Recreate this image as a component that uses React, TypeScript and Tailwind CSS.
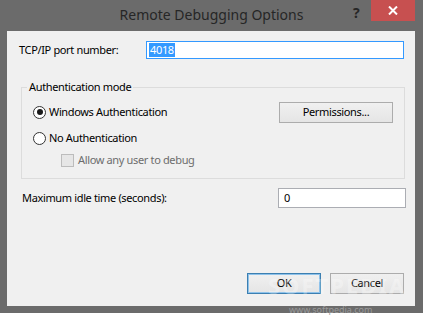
import { useState } from "react";

const font = { fontFamily: '"Noto Sans", "Liberation Sans", sans-serif' };

function Radio({ checked, label }: { checked: boolean; label: string }) {
  return (
    <div className="flex items-center gap-[3px]">
      <span className="w-[13px] h-[13px] rounded-full border border-[#333] bg-white flex items-center justify-center">
        {checked && <span className="w-[6px] h-[6px] rounded-full bg-[#1a1a1a]" />}
      </span>
      <span>{label}</span>
    </div>
  );
}

function DlgButton({ children, focused, className }: { children: React.ReactNode; focused?: boolean; className?: string }) {
  return (
    <button
      className={`h-[21px] flex items-center justify-center border bg-gradient-to-b from-[#f0f0f0] to-[#e5e5e5] ${
        focused ? "border-[#3c7fb1] outline outline-1 -outline-offset-2 outline-[#8ec2ea]" : "border-[#acacac]"
      } ${className ?? ""}`}
    >
      {children}
    </button>
  );
}

export default function App() {
  const [port] = useState("4018");
  return (
    <div className="w-[423px] h-[326px] bg-white text-[11px] tracking-[-0.35px] text-black" style={font}>
      <div className="relative w-[423px] h-[313px] bg-[#6b6b6b] flex flex-col">
        {/* Title bar */}
        <div className="relative h-[31px] flex items-center justify-center tracking-normal">
          <span className="text-[14px] text-[#262626] mt-[-2px]">Remote Debugging Options</span>
          <span className="absolute left-[353px] top-[2px] text-[14px] font-bold text-[#262626]">?</span>
          <div className="absolute left-[371px] top-0 w-[44px] h-[21px] bg-[#c75050] flex items-center justify-center">
            <svg width="10" height="9" viewBox="0 0 10 9">
              <path d="M1 0.5 L9 8.5 M9 0.5 L1 8.5" stroke="white" strokeWidth="2" />
            </svg>
          </div>
        </div>

        {/* Client area */}
        <div className="ml-[7px] mr-[8px] h-[275px] bg-[#f0f0f0] flex flex-col">
          <div className="flex items-center pt-[10px] pl-[12px]">
            <span className="w-[127px]">TCP/IP port number:</span>
            <div className="w-[258px] h-[18px] bg-white border border-[#3399ff] flex items-center pl-[2px]">
              <span className="bg-[#3399ff] text-white leading-[14px] px-[1px]">{port}</span>
            </div>
          </div>

          <div className="relative mt-[28px] ml-[14px] w-[384px] border border-[#dcdcdc] pt-[14px] pb-[10px] pl-[11px]">
            <span className="absolute left-[5px] top-[-9px] bg-[#f0f0f0] px-[2px] leading-[16px]">Authentication mode</span>
            <div className="h-[20px] flex items-center justify-between pr-[11px]">
              <Radio checked label="Windows Authentication" />
              <DlgButton className="w-[114px]">Permissions...</DlgButton>
            </div>
            <div className="h-[20px] mt-[6px] flex items-center">
              <Radio checked={false} label="No Authentication" />
            </div>
            <div className="h-[16px] mt-[4px] flex items-center gap-[4px] pl-[28px] text-[#6d6d6d]">
              <span className="w-[13px] h-[13px] border border-[#bcbcbc] bg-[#e6e6e6]" />
              <span>Allow any user to debug</span>
            </div>
          </div>

          <div className="flex items-center justify-between mt-[9px] pl-[15px] pr-[9px]">
            <span>Maximum idle time (seconds):</span>
            <div className="w-[128px] h-[20px] bg-white border border-[#abadb3] flex items-center pl-[5px]">0</div>
          </div>

          <div className="mt-auto mb-[12px] flex justify-end gap-[9px] pr-[11px]">
            <DlgButton focused className="w-[74px]">OK</DlgButton>
            <DlgButton className="w-[74px]">Cancel</DlgButton>
          </div>
        </div>

        {/* watermark */}
        <span className="absolute left-[268px] top-[274px] text-[22px] leading-none tracking-[2px] font-bold text-white/30 pointer-events-none">
          SOFTPEDIA
        </span>
        <span className="absolute left-[289px] top-[305px] text-[9px] leading-none tracking-normal text-[#9a9a9a] pointer-events-none">
          www.softpedia.com
        </span>
      </div>
    </div>
  );
}
